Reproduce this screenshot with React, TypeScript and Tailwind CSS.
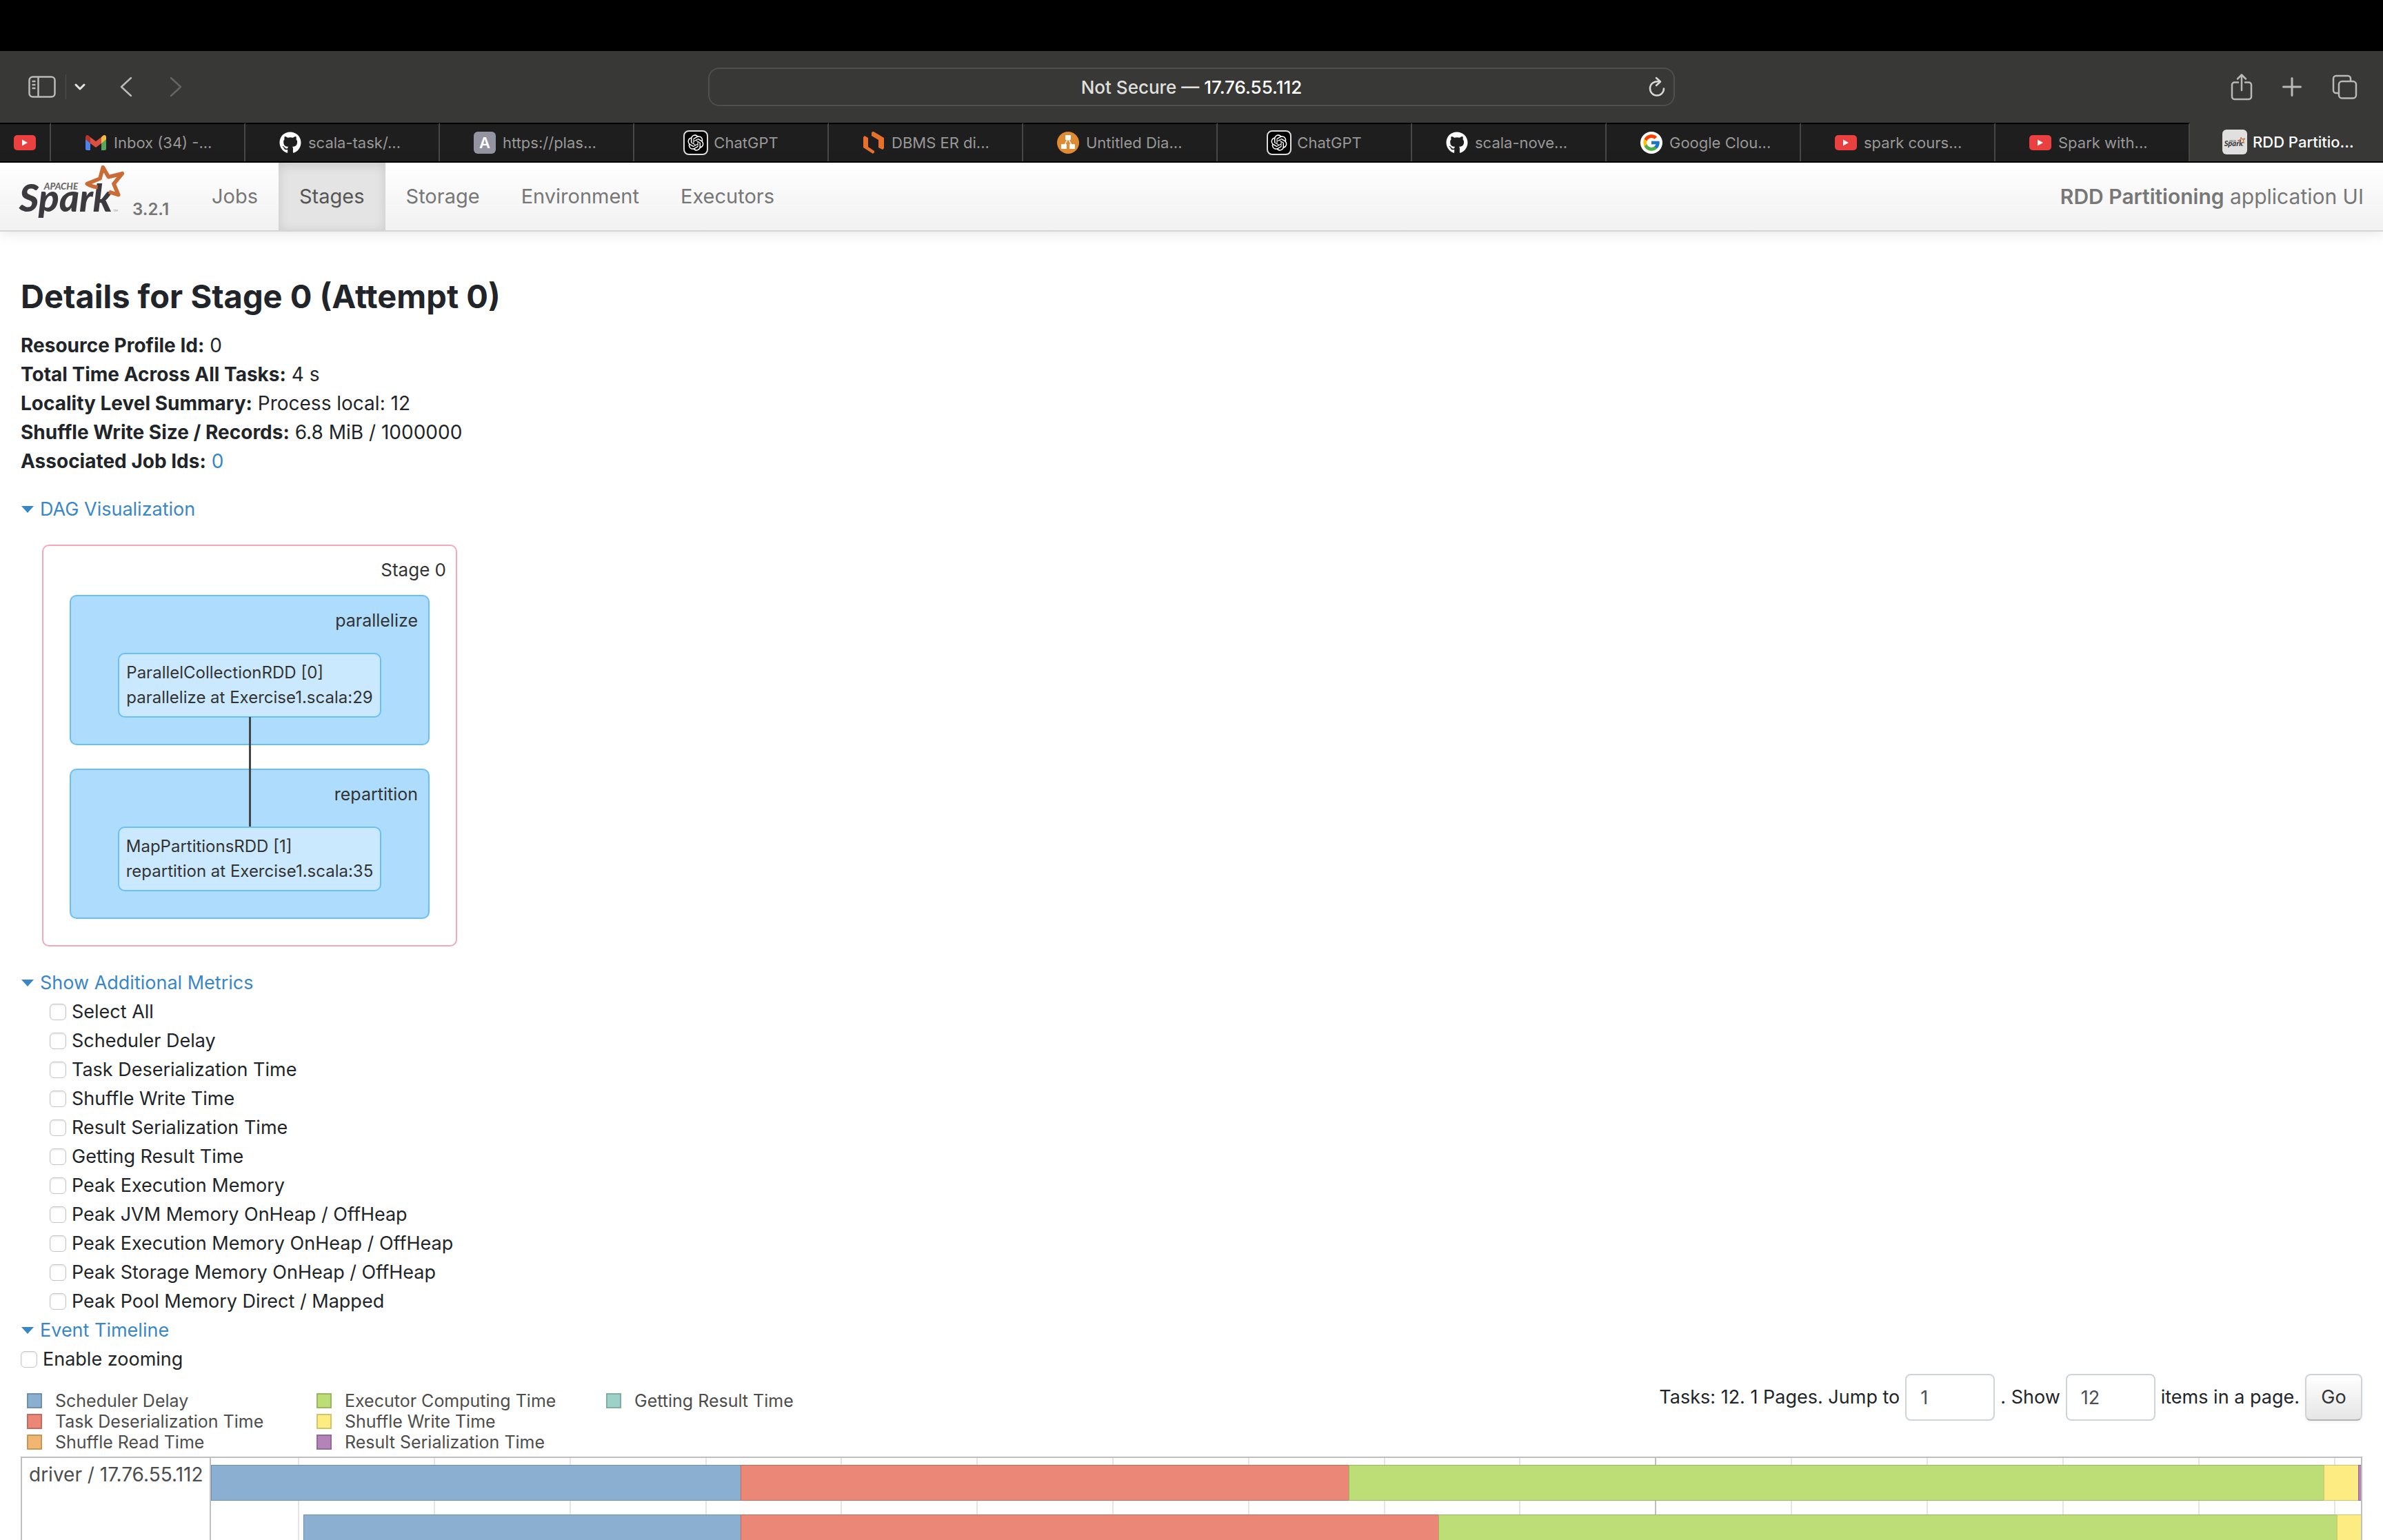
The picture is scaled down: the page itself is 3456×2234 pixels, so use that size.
import { ReactNode } from "react";
import { FaGithub } from "react-icons/fa";
import { FcGoogle } from "react-icons/fc";
import { RiOpenaiFill } from "react-icons/ri";

function SparkLogo({ className }: { className: string }) {
  return (
    <svg viewBox="45 30 480 250" className={className} role="img" aria-label="Apache Spark">
      <text x="164" y="146" fontFamily="Lato" fontWeight="900" fontStyle="italic" fontSize="40" fill="#6b6b69">
        APACHE
      </text>
      <text x="56" y="243" fontFamily="Lato" fontWeight="900" fontStyle="italic" fontSize="166" fill="#3c3a3e">
        Spark
      </text>
      <text x="466" y="243" fontFamily="Lato" fontSize="13" fill="#8a8a8a">
        TM
      </text>
      <path
        d="M398 137 Q370 134 352 122 L408 99 L421 50 L445 92 L505 77 L468 122 L488 170 L447 157"
        fill="none"
        stroke="#cb6c37"
        strokeWidth="17"
        strokeLinejoin="round"
      />
    </svg>
  );
}

function YouTubeIcon() {
  return (
    <svg viewBox="0 0 32 22" className="w-8">
      <rect width="32" height="22" rx="5" fill="#ea403f" />
      <path d="M12 6.500v9l8-4.500z" fill="#fff" />
    </svg>
  );
}

function GmailIcon() {
  return (
    <svg viewBox="0 0 30 22" className="w-[30px]">
      <path d="M0 3v17a2 2 0 0 0 2 2h5V8z" fill="#4c83ee" />
      <path d="M30 3v17a2 2 0 0 1-2 2h-5V8z" fill="#58a55c" />
      <path d="M7 3v9l8 6 8-6V3l-8 6z" fill="#d95040" />
      <path d="M0 3v3l7 6V3L5 1C2.500-1 0 .500 0 3z" fill="#b5352a" />
      <path d="M30 3v3l-7 6V3l2-2c2.500-2 5-.500 5 2z" fill="#f2bd42" />
    </svg>
  );
}

function LucidIcon() {
  return (
    <svg viewBox="0 0 32 32" className="w-8">
      <path d="M1 8l2-2 5 3v13l9 6v2l-2 2L1 23z" fill="#e8702d" />
      <path d="M14 0l2 0 15 9v15l-2 2-6-3V12l-10-6V2z" fill="#e8702d" />
    </svg>
  );
}

function DrawIoIcon() {
  return (
    <svg viewBox="0 0 32 32" className="w-8">
      <circle cx="16" cy="16" r="16" fill="#e08a31" />
      <path d="M16 10l-6 11M16 10l6 11" stroke="#fff" strokeWidth="1.500" />
      <rect x="12" y="5" width="8" height="7" rx="1" fill="#fff" />
      <rect x="6" y="18" width="8" height="7" rx="1" fill="#fff" />
      <rect x="18" y="18" width="8" height="7" rx="1" fill="#fff" />
    </svg>
  );
}

function ChatGptIcon() {
  return (
    <span className="flex size-9 items-center justify-center rounded-lg border-2 border-[#dcdcdc] bg-black">
      <RiOpenaiFill className="size-7 text-white" />
    </span>
  );
}

const githubIcon = <FaGithub className="size-8 text-white" />;

type Tab = { title: string; icon: ReactNode; short?: boolean; active?: boolean };

const tabs: Tab[] = [
  { title: "Inbox (34) -...", icon: <GmailIcon /> },
  { title: "scala-task/...", icon: githubIcon },
  {
    title: "https://plas...",
    icon: (
      <span className="flex size-8 items-center justify-center rounded-md bg-[#9393a1] text-[22px] font-semibold text-white">
        A
      </span>
    ),
  },
  { title: "ChatGPT", icon: <ChatGptIcon />, short: true },
  { title: "DBMS ER di...", icon: <LucidIcon /> },
  { title: "Untitled Dia...", icon: <DrawIoIcon /> },
  { title: "ChatGPT", icon: <ChatGptIcon />, short: true },
  { title: "scala-nove...", icon: githubIcon },
  {
    title: "Google Clou...",
    icon: (
      <span className="flex size-8 items-center justify-center rounded-full bg-white">
        <FcGoogle className="size-7" />
      </span>
    ),
  },
  { title: "spark cours...", icon: <YouTubeIcon /> },
  { title: "Spark with...", icon: <YouTubeIcon /> },
  {
    title: "RDD Partitio...",
    icon: (
      <span className="flex size-9 items-center justify-center rounded-md bg-[#e0e0e0]">
        <SparkLogo className="w-8" />
      </span>
    ),
    active: true,
  },
];

function Toolbar() {
  return (
    <div className="grid h-[104px] grid-cols-[1fr_1402px_1fr] items-center bg-[#383836] text-[#b9b9b7]">
      <div className="flex h-9 items-center pl-[41px]">
        <button aria-label="Show sidebar">
          <svg viewBox="0 0 40 32" className="w-10" fill="none" stroke="currentColor" strokeWidth="2.500">
            <rect x="1.500" y="1.500" width="37" height="29" rx="5" />
            <path d="M14.500 1.500v29M5.500 8h5M5.500 13h5M5.500 18h5" />
          </svg>
        </button>
        <span className="ml-3.5 h-9 w-px bg-[#50504e]" />
        <button aria-label="Tab groups" className="ml-3">
          <svg viewBox="0 0 16 10" className="w-4 text-[#e4e4e4]" fill="none" stroke="currentColor" strokeWidth="3" strokeLinecap="round" strokeLinejoin="round">
            <path d="M2 2l6 6 6-6" />
          </svg>
        </button>
        <button aria-label="Back" className="ml-[50px]">
          <svg viewBox="0 0 18 30" className="w-[18px]" fill="none" stroke="currentColor" strokeWidth="2.500" strokeLinecap="round" strokeLinejoin="round">
            <path d="M16 2L2 15l14 13" />
          </svg>
        </button>
        <button aria-label="Forward" className="ml-[54px] text-[#656563]">
          <svg viewBox="0 0 18 30" className="w-[18px]" fill="none" stroke="currentColor" strokeWidth="2.500" strokeLinecap="round" strokeLinejoin="round">
            <path d="M2 2l14 13L2 28" />
          </svg>
        </button>
      </div>
      <div className="relative flex h-14 items-center justify-center rounded-2xl border-2 border-[#4f4f4d] text-[26px] font-medium text-[#e0e0df]">
        <span>
          Not Secure — <span className="text-white">17.76.55.112</span>
        </span>
        <button aria-label="Reload" className="absolute right-3">
          <svg viewBox="0 0 24 30" className="w-6 text-[#d8d8d6]" fill="none" stroke="currentColor" strokeWidth="2.500" strokeLinecap="round" strokeLinejoin="round">
            <path d="M11 2l6 5.500-6 5.500M16 7.500c-8-1.500-14 3-14 10a10 10 0 0 0 20 0" />
          </svg>
        </button>
      </div>
      <div className="flex items-center justify-end pr-[37px]">
        <button aria-label="Share" className="mr-[43px]">
          <svg viewBox="0 0 32 40" className="w-8" fill="none" stroke="currentColor" strokeWidth="2.500" strokeLinecap="round" strokeLinejoin="round">
            <path d="M16 25V2.500M10 8.500l6-6 6 6M11 13.500H5.500a3.500 3.500 0 0 0-3.500 3.500v17.500A3.500 3.500 0 0 0 5.500 38h21a3.500 3.500 0 0 0 3.500-3.500V17a3.500 3.500 0 0 0-3.500-3.500H21" />
          </svg>
        </button>
        <button aria-label="New tab" className="mr-[43px]">
          <svg viewBox="0 0 28 28" className="w-7" fill="none" stroke="currentColor" strokeWidth="3" strokeLinecap="round">
            <path d="M14 1.500v25M1.500 14h25" />
          </svg>
        </button>
        <button aria-label="Tab overview">
          <svg viewBox="0 0 38 36" className="w-[38px]" fill="none" stroke="currentColor" strokeWidth="2.500" strokeLinejoin="round">
            <rect x="11" y="10" width="25" height="24.500" rx="4.500" />
            <path d="M11 27H7a4 4 0 0 1-4-4V6a4 4 0 0 1 4-4h17a4 4 0 0 1 4 4v4" />
          </svg>
        </button>
      </div>
    </div>
  );
}

function TabBar() {
  return (
    <div className="flex h-[58px] border-b-2 border-black bg-[#1e1e1e] text-[22px]">
      <button aria-label="YouTube" className="flex w-[74px] items-center justify-center border-t-2 border-r-2 border-t-black border-r-[#474747]">
        <YouTubeIcon />
      </button>
      {tabs.map((tab, i) => (
        <button
          key={i}
          className={
            tab.active
              ? "flex flex-1 items-center justify-center gap-2 bg-[#383836] font-medium whitespace-nowrap text-white"
              : "flex flex-1 items-center justify-center gap-2 border-t-2 border-r-2 border-t-black border-r-[#474747] whitespace-nowrap text-[#989898]"
          }
        >
          <span className="flex w-9 justify-center">{tab.icon}</span>
          <span className={tab.short ? "" : "w-[142px] text-left"}>{tab.title}</span>
        </button>
      ))}
    </div>
  );
}

function NavBar() {
  const links = ["Jobs", "Stages", "Storage", "Environment", "Executors"];
  return (
    <header className="flex h-[100px] items-stretch border-b-2 border-[#d4d4d4] bg-linear-to-b from-white to-[#f1f1f1] pr-7 pl-6 text-[#777777] shadow-[0_2px_20px_rgba(0,0,0,0.1)]">
      <a href="#" className="flex w-[253px] items-start">
        <SparkLogo className="w-40" />
        <span className="mt-[52px] ml-2 text-2xl font-semibold">3.2.1</span>
      </a>
      <nav className="flex text-[29px]">
        {links.map((link) => (
          <a
            key={link}
            href="#"
            className={
              link === "Stages"
                ? "flex items-center bg-[#e4e4e4] px-[30px] text-[#555555] shadow-[inset_0_3px_16px_rgba(0,0,0,0.125)]"
                : "flex items-center px-[30px]"
            }
          >
            {link}
          </a>
        ))}
      </nav>
      <p className="ml-auto self-center text-[30px]">
        <strong className="font-semibold">RDD Partitioning</strong> application UI
      </p>
    </header>
  );
}

function SectionToggle({ children }: { children: ReactNode }) {
  return (
    <button className="flex items-center gap-2 text-[#3a87c8]">
      <svg viewBox="0 0 20 10" className="w-5" fill="currentColor">
        <path d="M1 0h18l-9 10z" />
      </svg>
      {children}
    </button>
  );
}

function Checkbox({ label }: { label: string }) {
  return (
    <label className="flex items-center gap-2">
      <input
        type="checkbox"
        className="size-6 appearance-none rounded-md border border-[#c6c6c6] bg-white shadow-[inset_0_1px_3px_rgba(0,0,0,0.12)]"
      />
      {label}
    </label>
  );
}

function Cluster({ name, lines }: { name: string; lines: string[] }) {
  return (
    <div className="flex h-[218px] flex-col items-center rounded-[10px] border-2 border-[#69bffb] bg-[#addcfd]">
      <div className="self-end pt-3.5 pr-[15px] text-[25px]">{name}</div>
      <div className="mt-auto mb-[38px] flex h-[94px] flex-col justify-center rounded-[10px] border-2 border-[#69bffb] bg-[#cbe9fe] px-2.5 text-2xl leading-9">
        {lines.map((line) => (
          <div key={line}>{line}</div>
        ))}
      </div>
    </div>
  );
}

function DagVisualization() {
  return (
    <figure className="relative mt-[30px] ml-[31px] flex w-[602px] flex-col rounded-[10px] border-2 border-[#f3a9b8] px-[38px] pb-[38px] text-[#333333]">
      <figcaption className="-mr-6 pt-3.5 pb-[15px] text-right text-[26px]">Stage 0</figcaption>
      <div className="flex flex-col gap-[34px]">
        <Cluster name="parallelize" lines={["ParallelCollectionRDD [0]", "parallelize at Exercise1.scala:29"]} />
        <Cluster name="repartition" lines={["MapPartitionsRDD [1]", "repartition at Exercise1.scala:35"]} />
      </div>
      <span className="absolute top-[248px] left-[298px] h-[159px] w-[3px] bg-[#444444]" />
    </figure>
  );
}

const summary = [
  ["Resource Profile Id:", "0"],
  ["Total Time Across All Tasks:", "4 s"],
  ["Locality Level Summary:", "Process local: 12"],
  ["Shuffle Write Size / Records:", "6.8 MiB / 1000000"],
];

const metrics = [
  "Select All",
  "Scheduler Delay",
  "Task Deserialization Time",
  "Shuffle Write Time",
  "Result Serialization Time",
  "Getting Result Time",
  "Peak Execution Memory",
  "Peak JVM Memory OnHeap / OffHeap",
  "Peak Execution Memory OnHeap / OffHeap",
  "Peak Storage Memory OnHeap / OffHeap",
  "Peak Pool Memory Direct / Mapped",
];

const blue = "bg-[#8aafd0] border-[#6e8fad]";
const red = "bg-[#eb8777] border-[#c56a5e]";
const orange = "bg-[#f1b671] border-[#c99753]";
const green = "bg-[#bddd77] border-[#9ab65f]";
const yellow = "bg-[#fcec82] border-[#d3c46a]";
const purple = "bg-[#b383ba] border-[#946a9c]";
const teal = "bg-[#9dd1c8] border-[#80aea6]";

const legend = [
  ["Scheduler Delay", blue],
  ["Task Deserialization Time", red],
  ["Shuffle Read Time", orange],
  ["Executor Computing Time", green],
  ["Shuffle Write Time", yellow],
  ["Result Serialization Time", purple],
  ["Getting Result Time", teal],
];

const chartSpan = 3118;

const taskRows = [
  { start: 0, parts: [[768, blue], [882, red], [1414, green], [50, yellow], [4, purple]] as [number, string][] },
  { start: 134, parts: [[634, blue], [1012, red], [1303, green], [35, yellow]] as [number, string][] },
];

const gridCells = [128, 197, 197, 197, 196, 197, 197, 197, 197, 196, 197, 197, 197, 197, 197, 197, 37];

function percent(value: number) {
  return `${(value / chartSpan) * 100}%`;
}

function Timeline() {
  return (
    <div className="mt-1.5 flex h-[800px] border-2 border-[#bfbfbf] text-[28px] text-[#4d4d4d]">
      <div className="w-[274px] shrink-0 border-r-2 border-[#bfbfbf] pt-2 pl-2.5 leading-8 whitespace-nowrap">
        driver / 17.76.55.112
      </div>
      <div className="relative flex-1">
        <div className="absolute inset-0 flex">
          {gridCells.map((width, i) => (
            <span
              key={i}
              className={i === 10 ? "border-r-2 border-[#bfbfbf]" : i === 16 ? "" : "border-r-2 border-[#e5e5e5]"}
              style={{ width: percent(width) }}
            />
          ))}
        </div>
        <div className="relative flex flex-col gap-5 pt-2.5">
          {taskRows.map((row, i) => (
            <div key={i} className="flex h-[52px]">
              <span style={{ width: percent(row.start) }} />
              {row.parts.map(([width, color], j) => (
                <span key={j} className={`border-y border-l ${color}`} style={{ width: percent(width) }} />
              ))}
            </div>
          ))}
        </div>
      </div>
    </div>
  );
}

function Pagination() {
  const field =
    "h-[68px] w-[130px] rounded-lg border-2 border-[#ced4da] bg-white px-5 text-[27px] text-[#495057]";
  return (
    <form className="flex items-center gap-2" onSubmit={(e) => e.preventDefault()}>
      <label htmlFor="page">Tasks: 12. 1 Pages. Jump to</label>
      <input id="page" type="text" defaultValue="1" className={field} />
      <label htmlFor="size">. Show</label>
      <input id="size" type="text" defaultValue="12" className={field} />
      <span>items in a page.</span>
      <button
        type="submit"
        className="h-[68px] w-[83px] rounded-lg border-2 border-[#ced4da] border-b-[#b3b3b3] bg-linear-to-b from-white to-[#e6e6e6] text-[#333333] shadow-[0_2px_4px_rgba(0,0,0,0.05)]"
      >
        Go
      </button>
    </form>
  );
}

export default function App() {
  return (
    <div className="h-screen overflow-hidden bg-white font-['Inter',sans-serif]">
      <div className="h-[74px] bg-black" />
      <Toolbar />
      <TabBar />
      <NavBar />
      <main className="px-[30px] pt-16 text-[27px] leading-[42px] text-[#212529]">
        <h3 className="mb-5 text-[47px] leading-[60px] font-bold">Details for Stage 0 (Attempt 0)</h3>
        <ul className="text-[28px]">
          {summary.map(([label, value]) => (
            <li key={label}>
              <strong className="font-bold">{label}</strong> {value}
            </li>
          ))}
          <li>
            <strong className="font-bold">Associated Job Ids:</strong>{" "}
            <a href="#" className="text-[#3a87c8]">
              0
            </a>
          </li>
        </ul>
        <div className="mt-7">
          <SectionToggle>DAG Visualization</SectionToggle>
        </div>
        <DagVisualization />
        <div className="mt-8">
          <SectionToggle>Show Additional Metrics</SectionToggle>
          <div className="pl-[42px]">
            {metrics.map((metric) => (
              <Checkbox key={metric} label={metric} />
            ))}
          </div>
        </div>
        <SectionToggle>Event Timeline</SectionToggle>
        <Checkbox label="Enable zooming" />
        <div className="flex items-start justify-between">
          <ul className="mt-6 grid grid-flow-col grid-cols-[420px_420px_420px] grid-rows-3 pl-[9px] text-[25px] leading-[30px] text-[#4d4d4d]">
            {legend.map(([name, color]) => (
              <li key={name} className="flex items-center gap-[19px]">
                <span className={`size-[22px] border-2 ${color}`} />
                {name}
              </li>
            ))}
          </ul>
          <Pagination />
        </div>
        <Timeline />
      </main>
    </div>
  );
}
